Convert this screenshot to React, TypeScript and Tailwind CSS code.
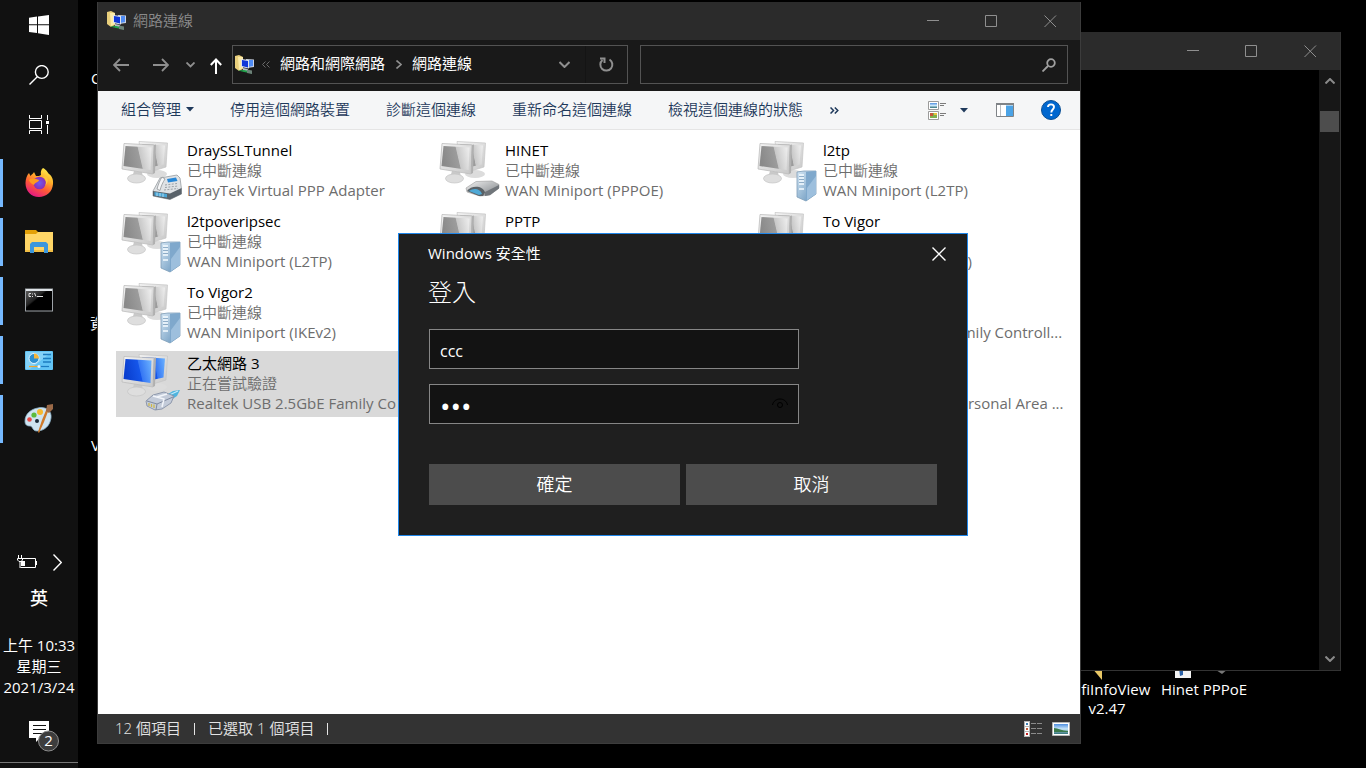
import React from 'react'

type Device = 'phone' | 'modem' | 'server' | 'cable'

interface Connection {
  name?: string
  status?: string
  adapter?: string
  device: Device
  active?: boolean
}

// null keeps an empty cell in the grid
const connections: (Connection | null)[] = [
  { name: 'DraySSLTunnel', status: '已中斷連線', adapter: 'DrayTek Virtual PPP Adapter', device: 'phone' },
  { name: 'HINET', status: '已中斷連線', adapter: 'WAN Miniport (PPPOE)', device: 'modem' },
  { name: 'l2tp', status: '已中斷連線', adapter: 'WAN Miniport (L2TP)', device: 'server' },
  { name: 'l2tpoveripsec', status: '已中斷連線', adapter: 'WAN Miniport (L2TP)', device: 'server' },
  { name: 'PPTP', device: 'server' },
  { name: 'To Vigor', adapter: 'WAN Miniport (IKEv2)', device: 'server' },
  { name: 'To Vigor2', status: '已中斷連線', adapter: 'WAN Miniport (IKEv2)', device: 'server' },
  null,
  { adapter: 'Realtek PCIe GbE Family Controll...', device: 'cable' },
  { name: '乙太網路 3', status: '正在嘗試驗證', adapter: 'Realtek USB 2.5GbE Family Co', device: 'cable', active: true },
  null,
  { adapter: 'Bluetooth Device (Personal Area ...', device: 'cable' },
]

const Gradients = () => (
  <svg width="0" height="0" className="absolute" aria-hidden="true">
    <defs>
      <linearGradient id="screenGray" x1="0" y1="0.2" x2="1" y2="0">
        <stop offset="0" stopColor="#8a8a8a" />
        <stop offset="0.5" stopColor="#9c9c9c" />
        <stop offset="0.53" stopColor="#c8c8c8" />
        <stop offset="1" stopColor="#f0f0f0" />
      </linearGradient>
      <linearGradient id="screenBlue" x1="0" y1="0.2" x2="1" y2="0">
        <stop offset="0" stopColor="#0a3fd0" />
        <stop offset="0.5" stopColor="#1556ea" />
        <stop offset="0.53" stopColor="#3576f4" />
        <stop offset="1" stopColor="#6db4ff" />
      </linearGradient>
      <linearGradient id="frame" x1="0" y1="0" x2="1" y2="1">
        <stop offset="0" stopColor="#f4f4f4" />
        <stop offset="1" stopColor="#c8c8c8" />
      </linearGradient>
      <linearGradient id="tower" x1="0" y1="0" x2="1" y2="1">
        <stop offset="0" stopColor="#d4e6f4" />
        <stop offset="1" stopColor="#5f8fb8" />
      </linearGradient>
      <linearGradient id="box" x1="0" y1="0" x2="1" y2="1">
        <stop offset="0" stopColor="#f2f2f2" />
        <stop offset="1" stopColor="#7b8084" />
      </linearGradient>
      <linearGradient id="foxBody" x1="0.8" y1="0" x2="0.3" y2="1">
        <stop offset="0" stopColor="#fff44f" />
        <stop offset="0.35" stopColor="#ffb02a" />
        <stop offset="0.65" stopColor="#ff5a36" />
        <stop offset="1" stopColor="#e31587" />
      </linearGradient>
      <radialGradient id="foxGlobe">
        <stop offset="0" stopColor="#6e5cf0" />
        <stop offset="1" stopColor="#8a2fb8" />
      </radialGradient>
      <linearGradient id="sky" x1="0" y1="0" x2="0" y2="1">
        <stop offset="0" stopColor="#4f8fe0" />
        <stop offset="0.5" stopColor="#c9e6fa" />
        <stop offset="1" stopColor="#2f6f77" />
      </linearGradient>
      <linearGradient id="cmd" x1="0" y1="0" x2="1" y2="1">
        <stop offset="0" stopColor="#666" />
        <stop offset="0.4" stopColor="#222" />
        <stop offset="0.45" stopColor="#000" />
      </linearGradient>
    </defs>
  </svg>
)

const DeviceOverlay = ({ device }: { device: Device }) => {
  if (device === 'phone') {
    return (
      <g>
        <path d="M32 51L39 38L56 35L59 38L60.500 49V54L49 59.500L32 56Z" fill="#dfe2e5" stroke="#8b9095" strokeWidth="0.7" />
        <path d="M32 51L49 53.500L60.500 48V54L49 59.500L32 56Z" fill="#59626a" />
        <path d="M33.500 52L46 54V57.500L33.500 55.500Z" fill="#4ba6d6" />
        <path d="M36 52.500V56M39 53V56.500M42 53.500V57" stroke="#dff3fc" strokeWidth="0.700" />
        <path d="M46 39L55 37.500L56.500 41L47 42.500Z" fill="#2787d6" />
        <path d="M41 37C39 40 37 45 36 49L39 50.500C40 46 42 42 44 39Z" fill="#f6f7f8" stroke="#85898d" strokeWidth="0.7" />
        <path d="M44 45L56 43.5M44 47.5L57 46M43 50L57 48.5" stroke="#9aa0a5" strokeWidth="1" strokeDasharray="2 1.4" />
      </g>
    )
  }
  if (device === 'modem') {
    return (
      <g>
        <path d="M27 48L37 41.500L53 41L60 44.500V48L51 55L41 56L28 52Z" fill="url(#box)" stroke="#9a9a9a" strokeWidth="0.6" />
        <path d="M46 52L60 45V48.500L51 55L46 56Z" fill="#70757a" />
        <path d="M28 51C32 45 44 45 46 52.500L44 56L40 56Z" fill="#5a6166" />
        <path d="M30 51C34 48 41 48 43 54L40 55Z" fill="#4fa9d6" />
      </g>
    )
  }
  if (device === 'server') {
    return (
      <g>
        <path d="M40 32L47 31H59V54L49 61L40 57Z" fill="url(#tower)" stroke="#7e9db8" strokeWidth="0.8" />
        <path d="M49 32L59 31V54L49 61Z" fill="#7fa8cc" />
        <path d="M50 48L59 36V54L50 60Z" fill="#a9c9e4" opacity="0.7" />
        <path d="M42 35H47M42 38H47M42 41H47M42 44H47M42 49H47" stroke="#f5fbff" strokeWidth="1.4" />
        <path d="M42 36.5H47M42 39.5H47M42 42.5H47" stroke="#7495b3" strokeWidth="0.6" />
      </g>
    )
  }
  return (
    <g>
      <path d="M44 43L52 38L59 37L56 43L50 47Z" fill="#4fb4de" />
      <path d="M46 43L57 38" stroke="#c5ecfb" strokeWidth="1.2" />
      <path d="M25 48L32 42L43 39L53 43L50 50L41 56L34 57L26 53Z" fill="#c3cbd9" stroke="#7d89a0" strokeWidth="0.8" />
      <path d="M26 48L36 51L52 44M36 51L35 57" stroke="#7f8aa0" fill="none" />
      <path d="M32 43L43 46L41 54M36 44L46 41" stroke="#f2f5fa" strokeWidth="1.5" fill="none" />
      <path d="M28 50V53M30.500 51V54M33 51.500V55" stroke="#d0b944" strokeWidth="1.2" />
    </g>
  )
}

const PcIcon = ({ device, active }: { device: Device; active?: boolean }) => {
  const screen = active ? 'url(#screenBlue)' : 'url(#screenGray)'
  return (
    <svg width="62" height="62" viewBox="0 0 62 62" className="ml-[5px] shrink-0" aria-hidden="true">
      <ellipse cx="36" cy="34" rx="10" ry="4" fill="#dcdcdc" />
      <path d="M18 1.500L46.500 3L45 27L32 31L22 30Z" fill="url(#frame)" stroke="#c4c4c4" strokeWidth="0.7" />
      <path d="M21 4L44 5.500L42.500 24.500L31 27Z" fill={screen} />
      <path d="M13 31L21 32L22 38H11Z" fill="#c9c9c9" />
      <ellipse cx="15.500" cy="38.500" rx="9" ry="4.500" fill="#dedede" stroke="#c4c4c4" strokeWidth="0.7" />
      <path d="M3 3.500L33 5L32 34L1 29Z" fill="url(#frame)" stroke="#bdbdbd" strokeWidth="0.8" />
      <path d="M4.500 6L30.500 7.500L29.500 30L2.500 26Z" fill={screen} />
      <path d="M33 5L35 4.500L34 33L32 34Z" fill="#b0b0b0" />
      <DeviceOverlay device={device} />
    </svg>
  )
}

const FolderNetIcon = () => (
  <svg width="20" height="20" viewBox="0 0 20 20" className="shrink-0" aria-hidden="true">
    <path d="M0 1L4 0L8 2V14L4 16L0 13Z" fill="#e9cf7c" />
    <path d="M3 2L8 2V13L4 15Z" fill="#fbeaa8" />
    <path d="M11 4L19 4.500V12L12 13Z" fill="#c9d2e2" />
    <path d="M12 5H18V11L13 12Z" fill="#4f8cf5" />
    <path d="M6 4L14 5V13.500L6 12Z" fill="#dfe4ee" />
    <path d="M7 5L13 6V12.500L7 11Z" fill="#1138d8" />
    <path d="M8 13L13 14V16H8Z" fill="#b9bec8" />
    <path d="M3 15.500L9 15L17 16.500V18.500L9 17Z" fill="#21a04a" />
    <path d="M12 14.500L17 15.500V19L12 18Z" fill="#6d8279" />
  </svg>
)

const CaptionButtons = () => (
  <div className="flex text-[#8f8f8f]">
    <button aria-label="最小化" className="flex h-[38px] w-[58px] items-center justify-center">
      <svg width="13" height="13" viewBox="0 0 13 13"><path d="M0 5.500H12" stroke="currentColor" /></svg>
    </button>
    <button aria-label="最大化" className="flex h-[38px] w-[58px] items-center justify-center">
      <svg width="13" height="13" viewBox="0 0 13 13"><path d="M.5.5H11.500V11.500H.5Z" fill="none" stroke="currentColor" /></svg>
    </button>
    <button aria-label="關閉" className="flex h-[38px] w-[60px] items-center justify-center">
      <svg width="13" height="13" viewBox="0 0 13 13"><path d="M.5.5L12 12M12 .5L.5 12" stroke="currentColor" /></svg>
    </button>
  </div>
)

const Caret = () => (
  <svg width="8" height="5" viewBox="0 0 8 5" aria-hidden="true"><path d="M0 0H8L4 4.500Z" fill="#1e395b" /></svg>
)

const Taskbar = () => (
  <nav className="relative flex h-full w-[78px] shrink-0 flex-col bg-[#111111] text-white">
    <button aria-label="開始" className="flex h-[50px] items-center justify-center">
      <svg width="20" height="20" viewBox="0 0 20 20" fill="#fff">
        <path d="M0 2.800L8 1.600V9.300H0ZM9 1.500L20 0V9.300H9ZM0 10.300H8V18L0 17ZM9 10.300H20V20L9 18.300Z" />
      </svg>
    </button>
    <button aria-label="搜尋" className="flex h-[50px] items-center justify-center">
      <svg width="20" height="20" viewBox="0 0 20 20" fill="none" stroke="#fff" strokeWidth="1.400">
        <circle cx="12.800" cy="7" r="6.400" />
        <path d="M8.300 11.700L.5 19.500" />
      </svg>
    </button>
    <button aria-label="工作檢視" className="flex h-[50px] items-center justify-center pb-0.5">
      <svg width="20" height="19" viewBox="0 0 20 19" fill="none" stroke="#fff">
        <path d="M.5 0V3.500H12.500V0M.5 5.500H12.500V13.500H.5ZM.5 19V15.500H12.500V19M18.500 0V5M18.500 10V19" />
        <path d="M17 6H20V9H17Z" fill="#fff" stroke="none" />
      </svg>
    </button>

    <div className="mt-[9px] flex flex-col gap-[11px]">
      <button aria-label="Firefox" className="flex h-12 items-center justify-center border-l-[3px] border-[#76b9ff] pr-[3px] pb-0.5">
        <svg width="29" height="29" viewBox="0 0 29 29">
          <path d="M18 0C22 2 23 5 24 6C27 8 28.500 12 28 16C27.500 24 21 29 14 29C6 29 .5 23 .5 15C.5 11 2 7 4 5L5.500 8C7 6 8 6 9 4L11 8C13 8 15 8 16 7C15.500 4 16 1.500 18 0Z" fill="url(#foxBody)" />
          <circle cx="14.500" cy="15" r="6.300" fill="url(#foxGlobe)" />
          <path d="M4 12C7 9 11 11 14 12C14 14 10 14 9 17C7 16 5 15 4 12Z" fill="#ff9a1f" />
          <path d="M18 9C21 11 22 15 20 18C23 15 24 11 21 8Z" fill="#ffc63a" />
        </svg>
      </button>
      <button aria-label="檔案總管" className="flex h-12 items-center justify-center border-l-[3px] border-[#76b9ff] pr-[3px]">
        <svg width="28" height="24" viewBox="0 0 28 24">
          <path d="M0 0H11L13 2V6H0Z" fill="#e3a008" />
          <path d="M0 4H11L13 2H28V22H0Z" fill="#ffd667" />
          <path d="M0 20H28V22H0Z" fill="#f0bd45" />
          <path d="M5 23V14L7 12H21L23 14V23H19V17H9V23Z" fill="#3c97dc" />
        </svg>
      </button>
      <button aria-label="命令提示字元" className="flex h-12 items-center justify-center border-l-[3px] border-[#76b9ff] pr-1 pb-0.5">
        <svg width="28" height="24" viewBox="0 0 28 24">
          <rect x="0.500" y="1" width="27" height="22" fill="url(#cmd)" stroke="#9ea3a8" />
          <path d="M1 2H27" stroke="#dfe4e8" strokeWidth="2" />
          <path d="M6 5.500H4V8.500H6M7.500 5.500V6.500M7.500 8V9M9.500 5L11 8.500M12 8.500H18" stroke="#e0e0e0" fill="none" />
        </svg>
      </button>
      <button aria-label="控制台" className="flex h-12 items-center justify-center border-l-[3px] border-[#76b9ff] pr-[3px]">
        <svg width="28" height="19" viewBox="0 0 28 19">
          <rect width="28" height="19" rx="1" fill="#62c4f5" />
          <path d="M1 1H27L5 18H1Z" fill="#a5e0fb" opacity="0.500" />
          <circle cx="9" cy="7.500" r="5" fill="#2d8fd0" stroke="#e6f6ff" />
          <path d="M9 7.500V2.500A5 5 0 0 1 14 7.500Z" fill="#f5b53a" />
          <path d="M18 3.500H26M18 7.500H26M18 11H26" stroke="#1c7cc0" strokeWidth="1.600" />
          <path d="M4 15.500H13" stroke="#f0a52c" strokeWidth="1.200" />
          <path d="M14 15.500H24" stroke="#1c7cc0" strokeWidth="1.200" />
          <circle cx="14" cy="15.500" r="1.500" fill="#e6f6ff" />
        </svg>
      </button>
      <button aria-label="小畫家" className="flex h-12 items-center justify-center border-l-[3px] border-[#76b9ff] pr-[3px]">
        <svg width="30" height="30" viewBox="0 0 30 30">
          <path d="M14 4C22 2 28 7 27 14C26 22 20 27 13 27C8 27 9 22 6 22C3 22 1 21 1 17C1 10 7 5 14 4Z" fill="#cfe4f1" stroke="#8db4cc" strokeWidth="0.800" />
          <circle cx="16" cy="8" r="3" fill="#f6b92f" />
          <circle cx="10" cy="11" r="2.600" fill="#5dbb3c" />
          <circle cx="5.500" cy="15.500" r="2.300" fill="#ea4a45" />
          <circle cx="13" cy="17" r="2" fill="#1b2a38" />
          <path d="M25 5L20 18L15 29L14 28L18 16L23 4Z" fill="#cf7a2b" />
          <path d="M23 1L29 0L29 5L25 9L22 7Z" fill="#9b6a48" />
        </svg>
      </button>
    </div>

    <div className="mt-auto flex flex-col items-center">
      <div className="flex h-9 w-full items-center justify-center gap-4 pb-0.5">
        <svg width="20" height="15" viewBox="0 0 20 15" fill="none" stroke="#fff" role="img" aria-label="電池">
          <path d="M5 3.500H18.500V12.500H3.500M19.500 6V10" />
          <path d="M4 6H8V11H4Z" fill="#fff" stroke="none" />
          <path d="M1.500 0V3M4.500 0V3M.5 3.500H5.500V5L4 6.500H2L.5 5ZM3 7V13" />
        </svg>
        <button aria-label="顯示隱藏的圖示">
          <svg width="9" height="17" viewBox="0 0 9 17" fill="none" stroke="#fff" strokeWidth="1.400"><path d="M.5.500L8.300 8.500L.5 16.500" /></svg>
        </button>
      </div>
      <button className="h-9 pb-0.5 text-lg leading-8 font-medium">英</button>
      <time className="mt-[18px] flex flex-col items-center text-[15px] leading-[21px] whitespace-nowrap">
        <span>上午 10:33</span>
        <span>星期三</span>
        <span>2021/3/24</span>
      </time>
      <button aria-label="通知" className="mt-1.5 flex h-[58px] items-center justify-center pt-1.5">
        <svg width="42" height="32" viewBox="-10 0 42 32">
          <path d="M1 1H21V18H12L8 22V18H1Z" fill="#fff" />
          <path d="M5 5.500H18M5 9.500H18M5 13.500H15" stroke="#111" />
          <circle cx="20.500" cy="21" r="10" fill="#3d3d3d" stroke="#8d8d8d" />
          <text x="20.500" y="26" fontSize="15" fill="#fff" textAnchor="middle">2</text>
        </svg>
      </button>
    </div>
    <button aria-label="顯示桌面" className="h-1.5 border-t border-[#777777]" />
  </nav>
)

const ConsoleWindow = () => (
  <section className="absolute top-8 right-[25px] bottom-[97px] left-[600px] flex flex-col border-r border-b border-[#333333] bg-black">
    <div className="flex justify-end bg-[#2b2b2b]">
      <CaptionButtons />
    </div>
    <div className="flex flex-1 justify-end">
      <div className="flex w-[21px] flex-col items-center justify-between bg-[#171717] py-2 text-[#8a8a8a]">
        <div className="flex w-full flex-col items-center">
          <svg width="10" height="6" viewBox="0 0 10 6" fill="none" stroke="currentColor" strokeWidth="2"><path d="M.5 5.500L5 1L9.500 5.500" /></svg>
          <div className="mt-[27px] h-[21px] w-[19px] bg-[#4d4d4d]" />
        </div>
        <svg width="10" height="6" viewBox="0 0 10 6" fill="none" stroke="currentColor" strokeWidth="2"><path d="M.5.500L5 5L9.500.500" /></svg>
      </div>
    </div>
  </section>
)

const AddressBar = () => (
  <div className="flex h-[51px] items-center bg-[#191919] pr-3 pb-0.5 pl-[15px] text-[#8f8f8f]">
    <button aria-label="上一頁" className="mr-6">
      <svg width="16" height="14" viewBox="0 0 16 14" fill="none" stroke="currentColor" strokeWidth="1.800"><path d="M16 7H1M7 1L1 7L7 13" /></svg>
    </button>
    <button aria-label="下一頁" className="mr-[17px]">
      <svg width="16" height="14" viewBox="0 0 16 14" fill="none" stroke="currentColor" strokeWidth="1.800"><path d="M0 7H15M9 1L15 7L9 13" /></svg>
    </button>
    <button aria-label="最近位置" className="mr-[15px]">
      <svg width="9" height="6" viewBox="0 0 9 6" fill="none" stroke="currentColor" strokeWidth="1.800"><path d="M.5.500L4.500 4.500L8.500.500" /></svg>
    </button>
    <button aria-label="上移" className="mr-[10px] pt-0.5 text-white">
      <svg width="12" height="16" viewBox="0 0 12 16" fill="none" stroke="currentColor" strokeWidth="2"><path d="M6 16V2M.8 7L6 1.500L11.200 7" /></svg>
    </button>
    <div className="flex h-[39px] w-[396px] items-center border border-[#535353] pl-0.5">
      <FolderNetIcon />
      <svg width="8" height="7" viewBox="0 0 8 7" fill="none" stroke="#6b6b6b" className="ml-[7px]"><path d="M3.500.500L.5 3.500L3.500 6.500M7.500.500L4.500 3.500L7.500 6.500" /></svg>
      <a href="#" className="ml-[10px] pb-0.5 text-[15px] text-white">網路和網際網路</a>
      <svg width="6" height="9" viewBox="0 0 6 9" fill="none" stroke="currentColor" strokeWidth="1.600" className="mr-[10px] ml-[11px]"><path d="M.5.500L5 4.500L.5 8.500" /></svg>
      <a href="#" className="pb-0.5 text-[15px] text-white">網路連線</a>
      <button aria-label="歷史位置" className="ml-auto pr-[15px]">
        <svg width="11" height="7" viewBox="0 0 11 7" fill="none" stroke="currentColor" strokeWidth="2"><path d="M.5 1L5.500 6L10.500 1" /></svg>
      </button>
      <button aria-label="重新整理" className="flex h-full w-[42px] items-center justify-center border-l border-[#141414]">
        <svg width="15" height="15" viewBox="0 0 15 15" fill="none" stroke="currentColor" strokeWidth="2"><path d="M10.500 2.500A6 6 0 1 1 3.500 3M1 1.500H5.500V6" /></svg>
      </button>
    </div>
    <label className="ml-3 flex h-[39px] flex-1 items-center border border-[#535353] pr-[11px]">
      <input type="text" aria-label="搜尋 網路連線" className="min-w-0 flex-1 bg-transparent px-2 text-[15px] text-white outline-none" />
      <svg width="14" height="14" viewBox="0 0 14 14" fill="none" stroke="#a0a0a0" strokeWidth="1.800"><circle cx="9" cy="5" r="3.800" /><path d="M6 8L.5 13.500" /></svg>
    </label>
  </div>
)

const Toolbar = () => (
  <div className="flex h-[39px] items-center border-b border-[#e5e5e5] bg-[#f5f6f7] pr-[19px] pl-[23px] text-[15px] font-[350] whitespace-nowrap text-[#1e395b]">
    <div className="flex items-center gap-9 pb-0.5">
      <button className="flex items-center gap-[5px]">組合管理<Caret /></button>
      <button>停用這個網路裝置</button>
      <button>診斷這個連線</button>
      <button>重新命名這個連線</button>
      <button>檢視這個連線的狀態</button>
    </div>
    <button aria-label="更多" className="ml-[27px]">
      <svg width="9" height="7" viewBox="0 0 9 7" fill="none" stroke="#1e395b" strokeWidth="1.500"><path d="M.5.500L3.500 3.500L.5 6.500M4.800.500L7.800 3.500L4.800 6.500" /></svg>
    </button>
    <div className="ml-auto flex items-center">
      <button aria-label="變更檢視" className="flex items-center gap-[14px]">
        <svg width="18" height="19" viewBox="0 0 18 19" fill="none">
          <path d="M.5.500H10.500V8.500H.5ZM.5 10.500H10.500V18.500H.5Z" fill="#fff" stroke="#9b9b9b" />
          <path d="M2 2H9V7H2Z" fill="url(#sky)" />
          <path d="M2 12H9V17H2Z" fill="#7fae4e" />
          <path d="M2 12H5V15H2Z" fill="#c8563a" />
          <path d="M6 12H9V14H6Z" fill="#e8c33f" />
          <path d="M12 2.500H18M12 4.500H16M12 12.500H18M12 14.500H16" stroke="#7b7b7b" />
        </svg>
        <Caret />
      </button>
      <button aria-label="預覽窗格" className="ml-7">
        <svg width="18" height="14" viewBox="0 0 18 14">
          <path d="M.5.500H17.500V13.500H.5Z" fill="#fff" stroke="#7f8387" />
          <path d="M0 0H18V2H0Z" fill="#7f8387" />
          <path d="M4.500 2V13" stroke="#b9bdc1" />
          <path d="M10 2.500H17V13H10Z" fill="#4ba3e6" />
        </svg>
      </button>
      <button aria-label="說明" className="ml-[27px]">
        <svg width="20" height="20" viewBox="0 0 20 20">
          <circle cx="10" cy="10" r="9.500" fill="#0067cf" stroke="#0b4f94" />
          <path d="M7 7C7 3.500 13 3.500 13 7C13 9.500 10.300 9.500 10.300 12.500M10.300 14V16" fill="none" stroke="#fff" strokeWidth="1.900" />
        </svg>
      </button>
    </div>
  </div>
)

const ConnectionItem = ({ item }: { item: Connection }) => (
  <li className={item.active ? 'flex h-[66px] bg-[#d9d9d9] pt-0.5' : 'flex h-[66px] pt-0.5'}>
    <PcIcon device={item.device} active={item.active} />
    <div className="ml-1 flex min-w-0 flex-col text-[15px] leading-5 whitespace-nowrap text-[#6d6d6d]">
      <span className="h-5 text-black">{item.name}</span>
      <span className="h-5 font-[350]">{item.status}</span>
      <span className="h-5">{item.adapter}</span>
    </div>
  </li>
)

const ExplorerWindow = () => (
  <section className="absolute top-0.5 right-[285px] bottom-6 left-[97px] flex flex-col border-x border-b border-[#3c3c3c] bg-white">
    <div className="flex h-[38px] items-center bg-[#2b2b2b] pl-[9px]">
      <FolderNetIcon />
      <h1 className="ml-1.5 pb-0.5 text-[15px] font-[350] text-[#8a8a8a]">網路連線</h1>
      <div className="ml-auto">
        <CaptionButtons />
      </div>
    </div>
    <AddressBar />
    <Toolbar />
    <ul className="grid flex-1 grid-cols-3 content-start gap-y-[5px] overflow-hidden pt-2 pr-[10px] pl-[18px]">
      {connections.map((item, i) => (item ? <ConnectionItem key={i} item={item} /> : <li key={i} />))}
    </ul>
    <footer className="flex h-[29px] items-center bg-[#333333] pr-[10px] pl-[17px] text-[15px] font-[350] text-[#e4e4e4]">
      <span>12 個項目</span>
      <span className="mx-[13px] h-3 w-px bg-[#e4e4e4]" />
      <span>已選取 1 個項目</span>
      <span className="mx-[13px] h-3 w-px bg-[#e4e4e4]" />
      <button aria-label="詳細資料" className="ml-auto">
        <svg width="18" height="16" viewBox="0 0 18 16" fill="none">
          <path d="M0 0H6V16H0Z" fill="#b5b5b5" />
          <path d="M1 1H5V5H1ZM1 6H5V10H1ZM1 11H5V15H1Z" fill="#fff" />
          <path d="M2 2H4V4H2Z" fill="#3d7fb5" />
          <path d="M2 7H4V9H2Z" fill="#c25c3a" />
          <path d="M2 12H4V14H2Z" fill="#c22020" />
          <path d="M7 2.500H12M13 2.500H18M7 7.500H12M13 7.500H18M7 12.500H12M13 12.500H18" stroke="#8b8b8b" />
        </svg>
      </button>
      <button aria-label="大圖示" className="ml-[10px]">
        <svg width="18" height="14" viewBox="0 0 18 14">
          <path d="M.5.500H17.500V13.500H.5Z" fill="#fff" stroke="#b5b5b5" />
          <path d="M2 2H16V12H2Z" fill="url(#sky)" />
          <path d="M2 6C6 6 10 9 16 9V10H2Z" fill="#3b7a4c" />
        </svg>
      </button>
    </footer>
  </section>
)

const SignInDialog = () => (
  <div className="absolute inset-0 flex items-center justify-center">
    <form role="dialog" aria-label="Windows 安全性" className="w-[570px] border border-[#1f86ea] bg-[#1f1f1f] pt-2.5 pr-[30px] pb-[30px] pl-[29px] text-white">
      <div className="flex h-5 items-center justify-between">
        <span className="pb-0.5 text-[15px] leading-5">Windows 安全性</span>
        <button type="button" aria-label="關閉" className="-mr-[9px]">
          <svg width="14" height="14" viewBox="0 0 14 14" fill="none" stroke="#fff" strokeWidth="1.400"><path d="M.5.500L13.500 13.500M13.500.500L.5 13.500" /></svg>
        </button>
      </div>
      <h2 className="mt-3 text-2xl leading-8 font-light">登入</h2>
      <div className="mt-[21px] ml-px flex w-[370px] flex-col gap-[15px]">
        <input type="text" aria-label="使用者名稱" defaultValue="ccc" className="block h-10 border border-[#868686] bg-[#131313] px-2.5 pt-1 text-base outline-none" />
        <div className="relative">
          <input type="password" aria-label="密碼" defaultValue="ccc" className="block h-10 w-full border border-[#868686] bg-[#131313] pt-1 pr-10 pl-2.5 text-[28px] outline-none" />
          <button type="button" aria-label="顯示密碼" className="absolute top-3.5 right-[11px]">
            <svg width="16" height="11" viewBox="0 0 16 11" fill="none" stroke="#000"><path d="M.5 7C2 -1 14 -1 15.500 7" /><circle cx="8" cy="7" r="2.500" /></svg>
          </button>
        </div>
      </div>
      <div className="mt-10 ml-px grid grid-cols-2 gap-1.5">
        <button type="submit" className="h-[41px] bg-[#4c4c4c] text-lg font-[350]">確定</button>
        <button type="button" className="h-[41px] bg-[#4c4c4c] text-lg font-[350]">取消</button>
      </div>
    </form>
  </div>
)

// desktop shortcuts that peek out from under the windows
const DesktopIcons = () => (
  <div className="absolute inset-0 text-center text-[15px] leading-[19px] text-white">
    <span className="absolute top-[69px] left-[91px]">C</span>
    <span className="absolute top-[314px] left-[90px]">資源回收筒</span>
    <span className="absolute top-[436px] left-[91px]">VPN</span>
    <div className="absolute right-[210px] bottom-[50px] flex w-[98px] flex-col items-center">
      <svg width="10" height="12" viewBox="0 0 10 12" className="mr-5"><path d="M0 0H10V12Z" fill="#e8c766" /></svg>
      <span>WifiInfoView</span>
      <span>v2.47</span>
    </div>
    <div className="absolute right-[113px] bottom-[69px] flex w-[98px] flex-col items-center">
      <svg width="54" height="16" viewBox="0 0 54 16" className="mr-1">
        <path d="M0 0H16V14H0Z" fill="#f3f3f3" />
        <path d="M4 4H8V11L5 12Z" fill="#2c62a8" />
        <path d="M38 4L54 4L47 10Z" fill="#777" />
      </svg>
      <span>Hinet PPPoE</span>
    </div>
  </div>
)

export default function App() {
  return (
    <main className="relative h-screen overflow-hidden bg-black font-['Open_Sans','Noto_Sans_CJK_TC',sans-serif]">
      <Gradients />
      <DesktopIcons />
      <Taskbar />
      <ConsoleWindow />
      <ExplorerWindow />
      <SignInDialog />
    </main>
  )
}
